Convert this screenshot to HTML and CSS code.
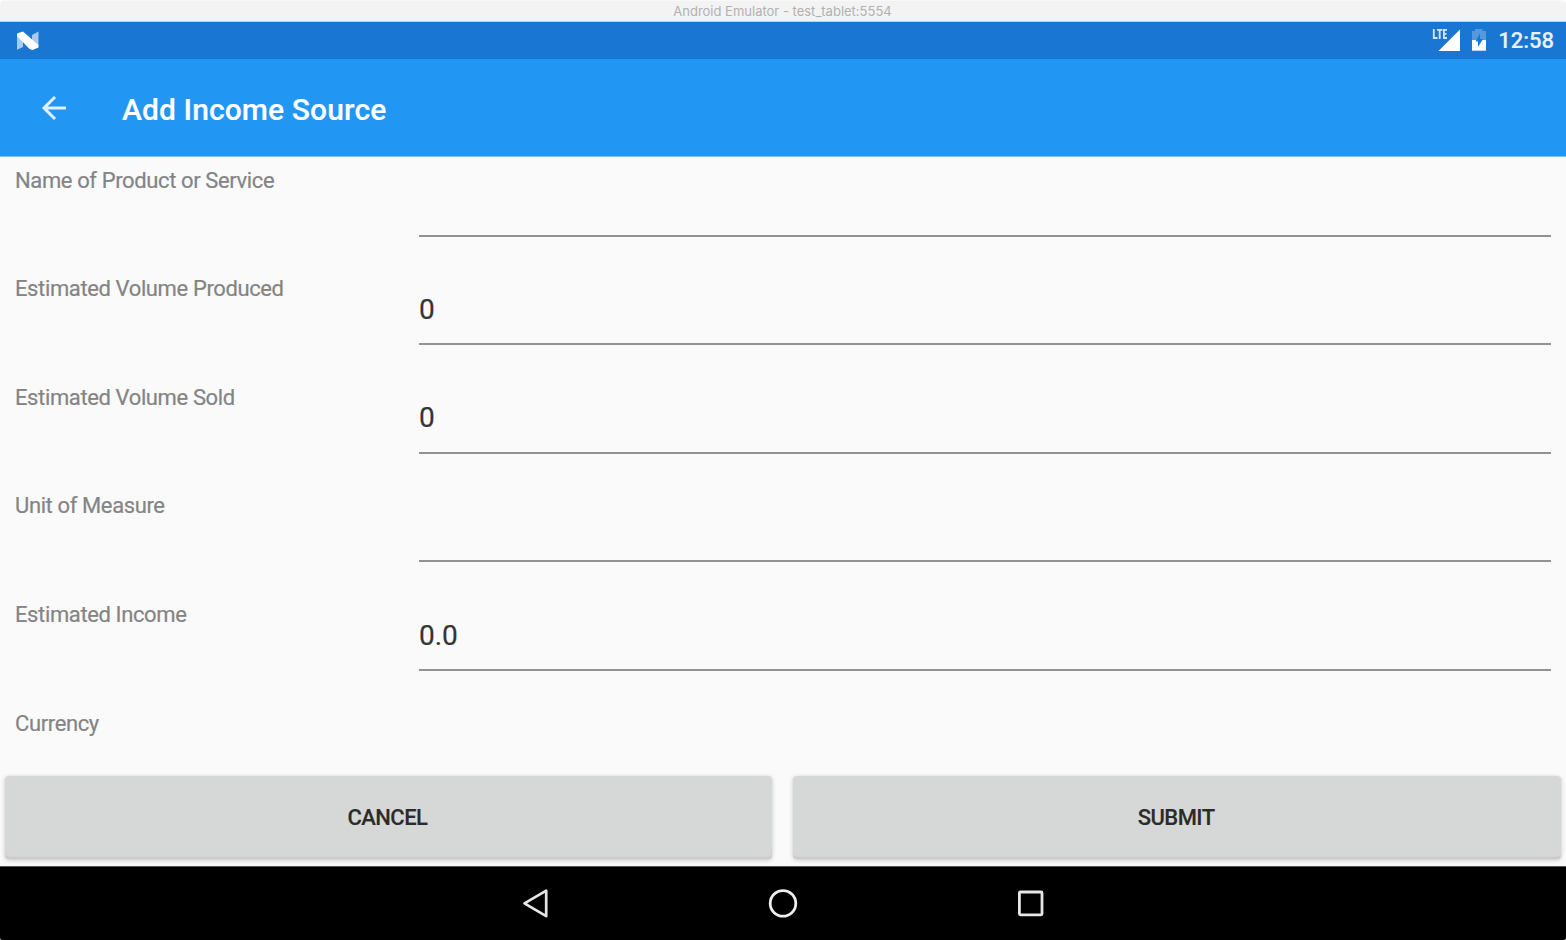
FILE: index.html
```html
<!DOCTYPE html>
<html lang="en">
<head>
<meta charset="utf-8">
<title>Android Emulator - test_tablet:5554</title>
<link rel="stylesheet" href="styles.css">
</head>
<body>
<div class="window">
  <header class="window-bar"><span class="window-title">Android Emulator - test_tablet:5554</span></header>
  <div class="status-bar">
    <svg class="icon-n" viewBox="0 0 24 20" width="24" height="20">
      <path d="M1 3L7 8V16L1 18.800ZM16 4L22.500 .600V15L16 11Z" fill="#a9cbef"/>
      <path d="M1 2.500L7 .500L22.500 14V16.500L16.500 19L13.500 18L1 5Z" fill="#fff"/>
    </svg>
    <div class="status-right">
      <svg class="icon-signal" viewBox="0 0 28 24" width="28" height="24">
        <path d="M28 .500V22H6.500Z" fill="#fff"/>
        <path d="M1.800 0V9H5.500M5 .900H10.500M7.700 .900V10M15 .900H11.900V9H15M11.900 4.800H14.500" fill="none" stroke="#d5e6f8" stroke-width="1.800"/>
      </svg>
      <svg class="icon-battery" viewBox="0 0 16 24" width="16" height="24">
        <path d="M1 2H4V0H11.500V2H15V12H1Z" fill="#5498de"/>
        <path d="M1 11H15V21.700H1Z" fill="#fff"/>
        <path d="M9 4.500L4.500 12.500H7V18L12 10H9Z" fill="#1976d2"/>
      </svg>
      <span class="clock">12:58</span>
    </div>
  </div>
  <div class="app-bar">
    <svg class="icon-back" viewBox="0 0 26 26" width="26" height="26"><path d="M25 13H3.500M14 2L3 13L14 24" fill="none" stroke="#e0f0fe" stroke-width="3"/></svg>
    <h1 class="app-title">Add Income Source</h1>
  </div>
  <main class="form">
    <div class="row"><label class="label">Name of Product or Service</label><div class="field"></div></div>
    <div class="row"><label class="label">Estimated Volume Produced</label><div class="field">0</div></div>
    <div class="row"><label class="label">Estimated Volume Sold</label><div class="field">0</div></div>
    <div class="row"><label class="label">Unit of Measure</label><div class="field"></div></div>
    <div class="row"><label class="label">Estimated Income</label><div class="field">0.0</div></div>
    <div class="row"><label class="label">Currency</label></div>
  </main>
  <div class="actions">
    <button class="button" type="button">CANCEL</button>
    <button class="button" type="button">SUBMIT</button>
  </div>
  <nav class="nav-bar">
    <svg viewBox="0 0 30 32" width="30" height="32"><path d="M26.200 2.600V28.200L4.500 15.400Z" fill="none" stroke="#e6e6e6" stroke-width="2.700" stroke-linejoin="round"/></svg>
    <svg viewBox="0 0 30 32" width="30" height="32"><circle cx="15" cy="15.400" r="12.800" fill="none" stroke="#eee" stroke-width="2.800"/></svg>
    <svg viewBox="0 0 30 32" width="30" height="32"><rect x="3.400" y="4" width="22.600" height="22.800" rx="1" fill="none" stroke="#e6e6e6" stroke-width="2.800"/></svg>
  </nav>
</div>
</body>
</html>
```
FILE: styles.css
```css
* { box-sizing: border-box; }
html { background: #fff; }
body { margin: 0; font-family: Roboto, "Liberation Sans", sans-serif; }
.window {
  display: flex;
  flex-direction: column;
  width: 1566px;
  height: 940px;
  overflow: hidden;
  border-radius: 5px 5px 2px 2px;
  background: #fafafa;
}
.window-bar {
  height: 22px;
  flex: none;
  padding-right: 1px;
  background: #f3f3f3;
  border-top: 1px solid #f9f9f9;
  border-bottom: 1px solid #cdcdcd;
  text-align: center;
  font: 13px/21px Inter, sans-serif;
  color: #b1b1b1;
}
.status-bar {
  height: 37px;
  flex: none;
  display: flex;
  align-items: center;
  justify-content: space-between;
  padding: 0 12px 0 16px;
  background: #1976d2;
}
.status-right { display: flex; align-items: center; }
.icon-signal { margin-right: 11px; }
.clock {
  margin-left: 11px;
  font-size: 22px;
  line-height: 26px;
  font-weight: 500;
  color: #e8f1fb;
  -webkit-text-stroke: .15px #e8f1fb;
}
.app-bar {
  height: 98px;
  flex: none;
  display: flex;
  align-items: center;
  padding-left: 41px;
  background: #2196f3;
  border-bottom: 1px solid #7fc1f7;
}
.app-title {
  margin: 4px 0 0 55px;
  font-size: 30px;
  line-height: 36px;
  font-weight: 500;
  letter-spacing: .1px;
  color: #fff;
  -webkit-text-stroke: .15px #fff;
}
.form {
  height: 611px;
  flex: none;
  overflow: hidden;
}
.row {
  display: flex;
  height: 108.670px;
  padding: 0 15px;
}
.label {
  width: 404px;
  padding-top: 10.500px;
  font-size: 22px;
  line-height: 26px;
  letter-spacing: -.38px;
  color: #848484;
  -webkit-text-stroke: .2px #848484;
}
.field {
  flex: 1;
  height: 79.500px;
  padding-top: 27px;
  border-bottom: 2px solid #929292;
  font-size: 28px;
  line-height: 34px;
  color: #353535;
  -webkit-text-stroke: .2px #353535;
}
.actions {
  height: 98px;
  flex: none;
  display: grid;
  grid-template-columns: 1fr 1fr;
  gap: 21px;
  padding: 8px 5px 6px 4.500px;
}
.button {
  height: 83px;
  padding: 1px 2px 0 0;
  border: 0;
  border-radius: 4px;
  background: #d6d8d7;
  box-shadow: 0 1px 4px rgba(0, 0, 0, .22), inset 0 -3px 2px -1px rgba(0, 0, 0, .07);
  font: 500 22px/26px Roboto, sans-serif;
  letter-spacing: -.55px;
  color: #2b2b2b;
  -webkit-text-stroke: .15px #2b2b2b;
}
.nav-bar {
  height: 74px;
  flex: none;
  display: flex;
  align-items: center;
  justify-content: center;
  gap: 218px;
  border-top: 1px solid #555;
  background: #000;
}
```
